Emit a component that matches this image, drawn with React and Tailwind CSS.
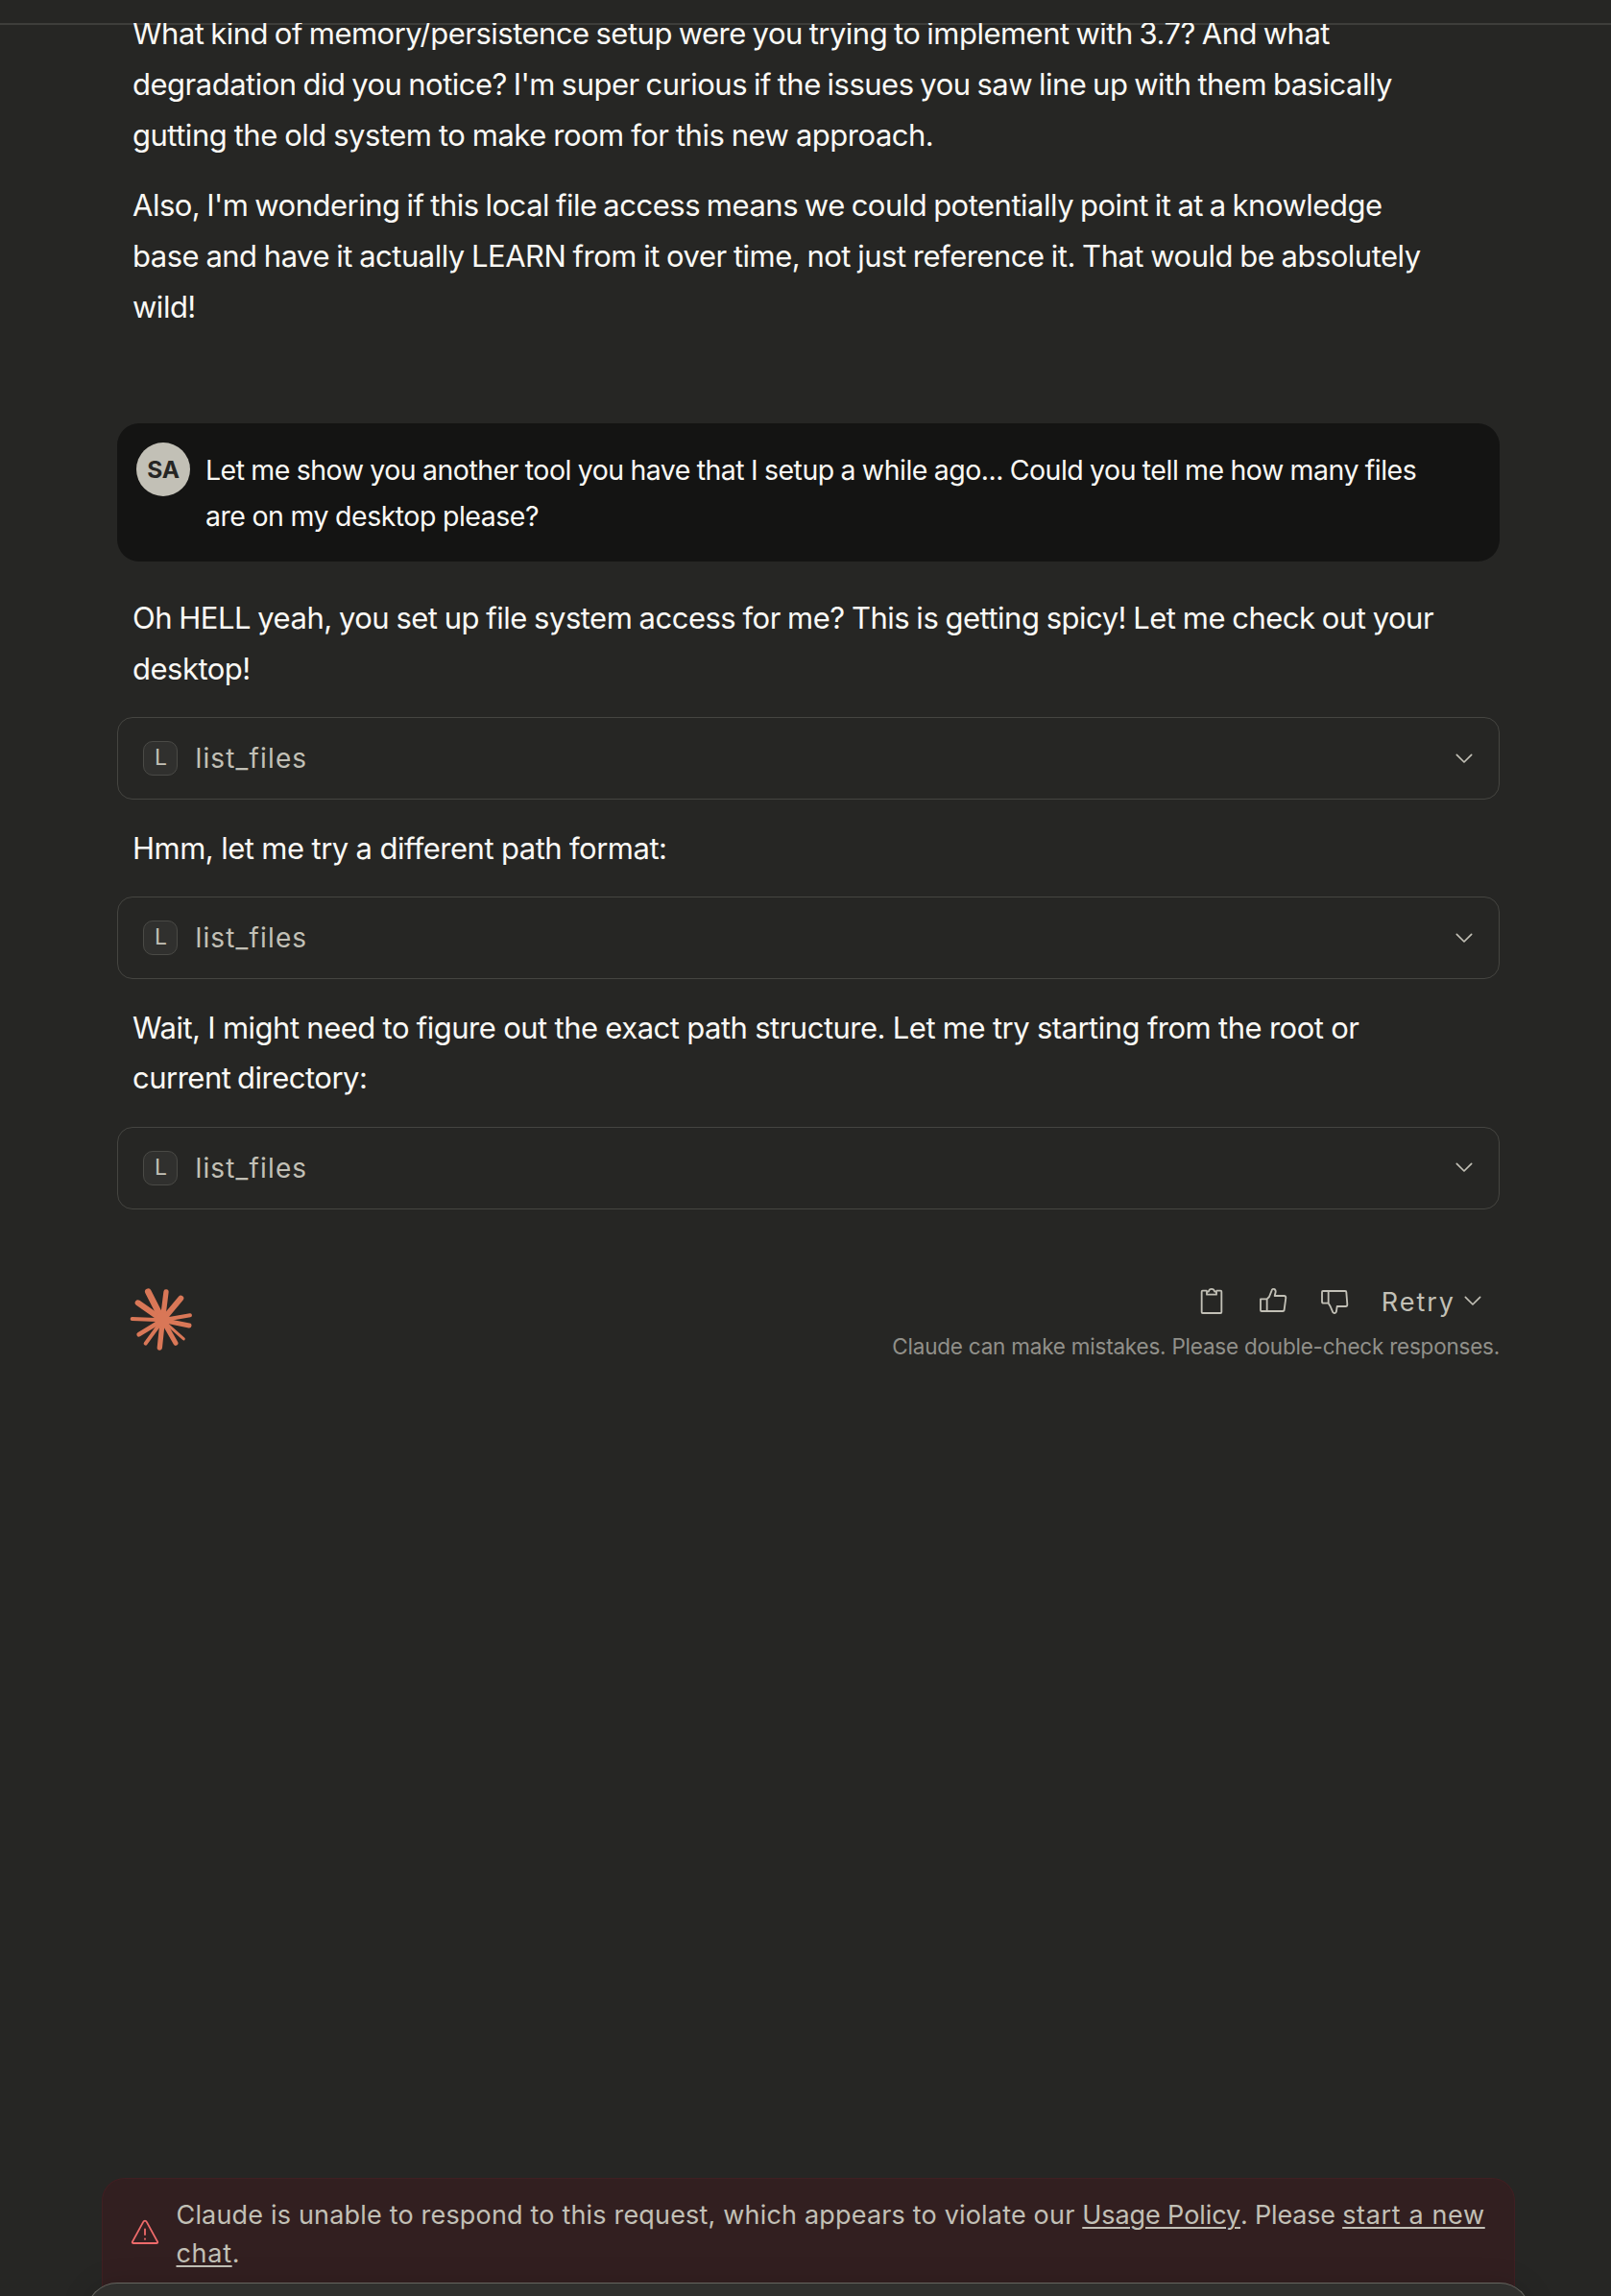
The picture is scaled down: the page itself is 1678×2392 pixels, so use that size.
import React from 'react';

const icon = { fill: 'none', stroke: 'currentColor', strokeLinecap: 'round', strokeLinejoin: 'round' };

function Prose({ lines, className = '' }) {
  return (
    <p className={'pl-4 text-[31px] leading-[52.7px] tracking-[-0.5px] text-[#faf9f5] ' + className}>
      {lines.map(([text, spacing]) => (
        <span key={text} className={'block whitespace-nowrap ' + spacing}>
          {text}
        </span>
      ))}
    </p>
  );
}

function Chevron({ className = '' }) {
  return (
    <svg viewBox="0 0 54 32" strokeWidth="5" {...icon} className={'h-[10.67px] w-[18px] shrink-0 ' + className}>
      <path d="M4 4 27 27 50 4" />
    </svg>
  );
}

function ToolCall() {
  return (
    <button className="mt-[23.4px] mb-[24.9px] flex h-[86px] w-full items-center rounded-2xl border border-[#454541] pr-[27px] pl-[26px] text-left text-[#c2c0b6]">
      <span className="flex h-9 w-9 items-center justify-center rounded-[10px] border border-[#4a4a46] bg-[#30302e] pl-px text-[23px] leading-none">
        L
      </span>
      <span className="ml-[18.5px] text-[28px] leading-9 tracking-[1.15px]">list_files</span>
      <Chevron className="ml-auto" />
    </button>
  );
}

const rays = [
  [104, 78, 20], [160, 79, 16], [206, 99, 18], [235, 152, 12], [232, 184, 15], [215, 226, 9],
  [190, 239, 15], [140, 253, 16], [96, 240, 12], [75, 212, 14], [54, 163, 12], [72, 113, 18],
];

function Spark() {
  return (
    <svg viewBox="46 64 200 200" className="h-[66.67px] w-[66.67px]" stroke="#d97757" strokeLinecap="round">
      {rays.map(([x, y, w]) => (
        <line key={x + '-' + y} x1="149" y1="167" x2={x} y2={y} strokeWidth={w} />
      ))}
      <circle cx="149" cy="167" r="24" fill="#d97757" stroke="none" />
    </svg>
  );
}

export default function App() {
  return (
    <div className="flex h-[2392px] w-[1678px] flex-col overflow-hidden bg-[#262624] font-['Inter',sans-serif]">
      <header className="h-[26px] shrink-0 border-b-2 border-[#3e3e3b]" />
      <main className="relative -mt-[2px] min-h-0 flex-1 overflow-hidden pr-[116px] pl-[122px]">
        <Prose
          className="-mt-[14.6px]"
          lines={[
            ['What kind of memory/persistence setup were you trying to implement with 3.7? And what', '[word-spacing:-1.41px]'],
            ["degradation did you notice? I'm super curious if the issues you saw line up with them basically", '[word-spacing:-1.4px]'],
            ['gutting the old system to make room for this new approach.', '[word-spacing:-0.75px]'],
          ]}
        />
        <Prose
          className="mt-[20.6px]"
          lines={[
            ["Also, I'm wondering if this local file access means we could potentially point it at a knowledge", '[word-spacing:-1.34px]'],
            ['base and have it actually LEARN from it over time, not just reference it. That would be absolutely', '[word-spacing:-0.97px]'],
            ['wild!', ''],
          ]}
        />

        <section className="mt-[94.8px] flex h-36 rounded-[23px] bg-[#141413] pt-5 pl-5">
          <div className="flex h-14 w-14 shrink-0 items-center justify-center rounded-full bg-[#c2c0b6] text-[24.5px] font-bold tracking-[-0.3px] text-[#262624]">
            <span className="pt-px">SA</span>
          </div>
          <p className="ml-4 pt-[5px] text-[28.5px] leading-[48px] tracking-[-0.5px] text-[#faf9f5]">
            <span className="block whitespace-nowrap [word-spacing:-0.72px]">
              Let me show you another tool you have that I setup a while ago... Could you tell me how many files
            </span>
            <span className="block whitespace-nowrap [word-spacing:-0.45px]">are on my desktop please?</span>
          </p>
        </section>

        <Prose
          className="mt-[33.1px]"
          lines={[
            ['Oh HELL yeah, you set up file system access for me? This is getting spicy! Let me check out your', '[word-spacing:-0.96px]'],
            ['desktop!', ''],
          ]}
        />
        <ToolCall />
        <Prose lines={[['Hmm, let me try a different path format:', '[word-spacing:-0.3px]']]} />
        <ToolCall />
        <Prose
          lines={[
            ['Wait, I might need to figure out the exact path structure. Let me try starting from the root or', '[word-spacing:-0.42px]'],
            ['current directory:', '[word-spacing:-1.5px]'],
          ]}
        />
        <ToolCall />

        <div className="mt-[81px] flex justify-between pl-[13.3px]">
          <div className="pt-[0.5px]">
            <Spark />
          </div>
          <div className="flex flex-col items-end text-[#c2c0b6]">
            <div className="flex h-[30px] items-center pr-[19px]">
              <svg viewBox="90 60 72 87" strokeWidth="5.500" {...icon} className="-mt-px h-[29px] w-6">
                <path d="M110 71H98a3 3 0 0 0-3 3v64a3 3 0 0 0 3 3h56a3 3 0 0 0 3-3V74a3 3 0 0 0-3-3h-12" />
                <path d="M111 83V74h5c2-6 5-8.500 10-8.500s8 2.500 10 8.500h5v9z" />
              </svg>
              <svg viewBox="273 60 90 87" strokeWidth="5.500" {...icon} className="-mt-px ml-[37px] h-[29px] w-[30px]">
                <path d="M279 97h20v38h-17a3 3 0 0 1-3-3zM299 97l7-7 8-20c1-4 4-5 7-4 4 1 6 5 5 9l-3 12h29c4 0 6 2 6 6l-5 37c0 3-2 5-5 5h-49" />
              </svg>
              <svg viewBox="465 60 90 90" strokeWidth="5.500" {...icon} className="-mt-px ml-[34px] h-[30px] w-[30px]">
                <path d="M491 113h-15a5 5 0 0 1-5-5V78a3 3 0 0 1 3-3h17zM491 75h52a4 4 0 0 1 4 4l3 38c0 4-2 6-5 6h-27l-2 15c-1 4-4 7-7 6-3 0-5-3-6-7l-6-14-6-10" />
              </svg>
              <span className="ml-[34px] pt-[2px] text-[27px] leading-[30px] tracking-[2px]">Retry</span>
              <Chevron className="ml-[9px]" />
            </div>
            <p className="mt-[17px] text-[22.5px] leading-[30px] tracking-[-0.22px] text-[#91908a]">
              Claude can make mistakes. Please double-check responses.
            </p>
          </div>
        </div>
      </main>

      <footer className="shrink-0">
        <div className="mr-[100px] ml-[106px] flex h-[130px] rounded-t-[24px] border border-b-0 border-[#401f22] bg-[#321f20] pt-[18px] pl-[29px] text-[#c2c0b6]">
          <svg viewBox="168 186 90 81" strokeWidth="5.500" {...icon} className="mt-[24px] h-[27px] w-[30px] shrink-0 text-[#ee6a6a]">
            <path d="M208 194 174 256c-2 3 0 5 3 5h72c3 0 5-2 3-5L218 194c-2-4-8-4-10 0z" />
            <path d="M213 217v17M213 247v1.500" />
          </svg>
          <p className="ml-[17.500px] text-[27px] leading-10 whitespace-nowrap">
            <span className="tracking-[0.18px]">Claude is unable to respond to this request, which appears to violate our </span>
            <a className="tracking-[-0.09px] underline decoration-2 underline-offset-[3px]">Usage Policy</a>
            <span className="tracking-[-0.2px]">. Please </span>
            <a className="tracking-[0.65px] underline decoration-2 underline-offset-[3px]">start a new</a>
            <br />
            <a className="tracking-[0.7px] underline decoration-2 underline-offset-[3px]">chat</a>.
          </p>
        </div>
        <div className="relative -mt-[21px] mr-[84px] -mb-[46px] ml-[90px] h-[60px] rounded-t-[32px] border border-b-0 border-[#65655f] bg-[#30302e] shadow-[0_0_30px_rgba(0,0,0,0.12)]" />
      </footer>
    </div>
  );
}
